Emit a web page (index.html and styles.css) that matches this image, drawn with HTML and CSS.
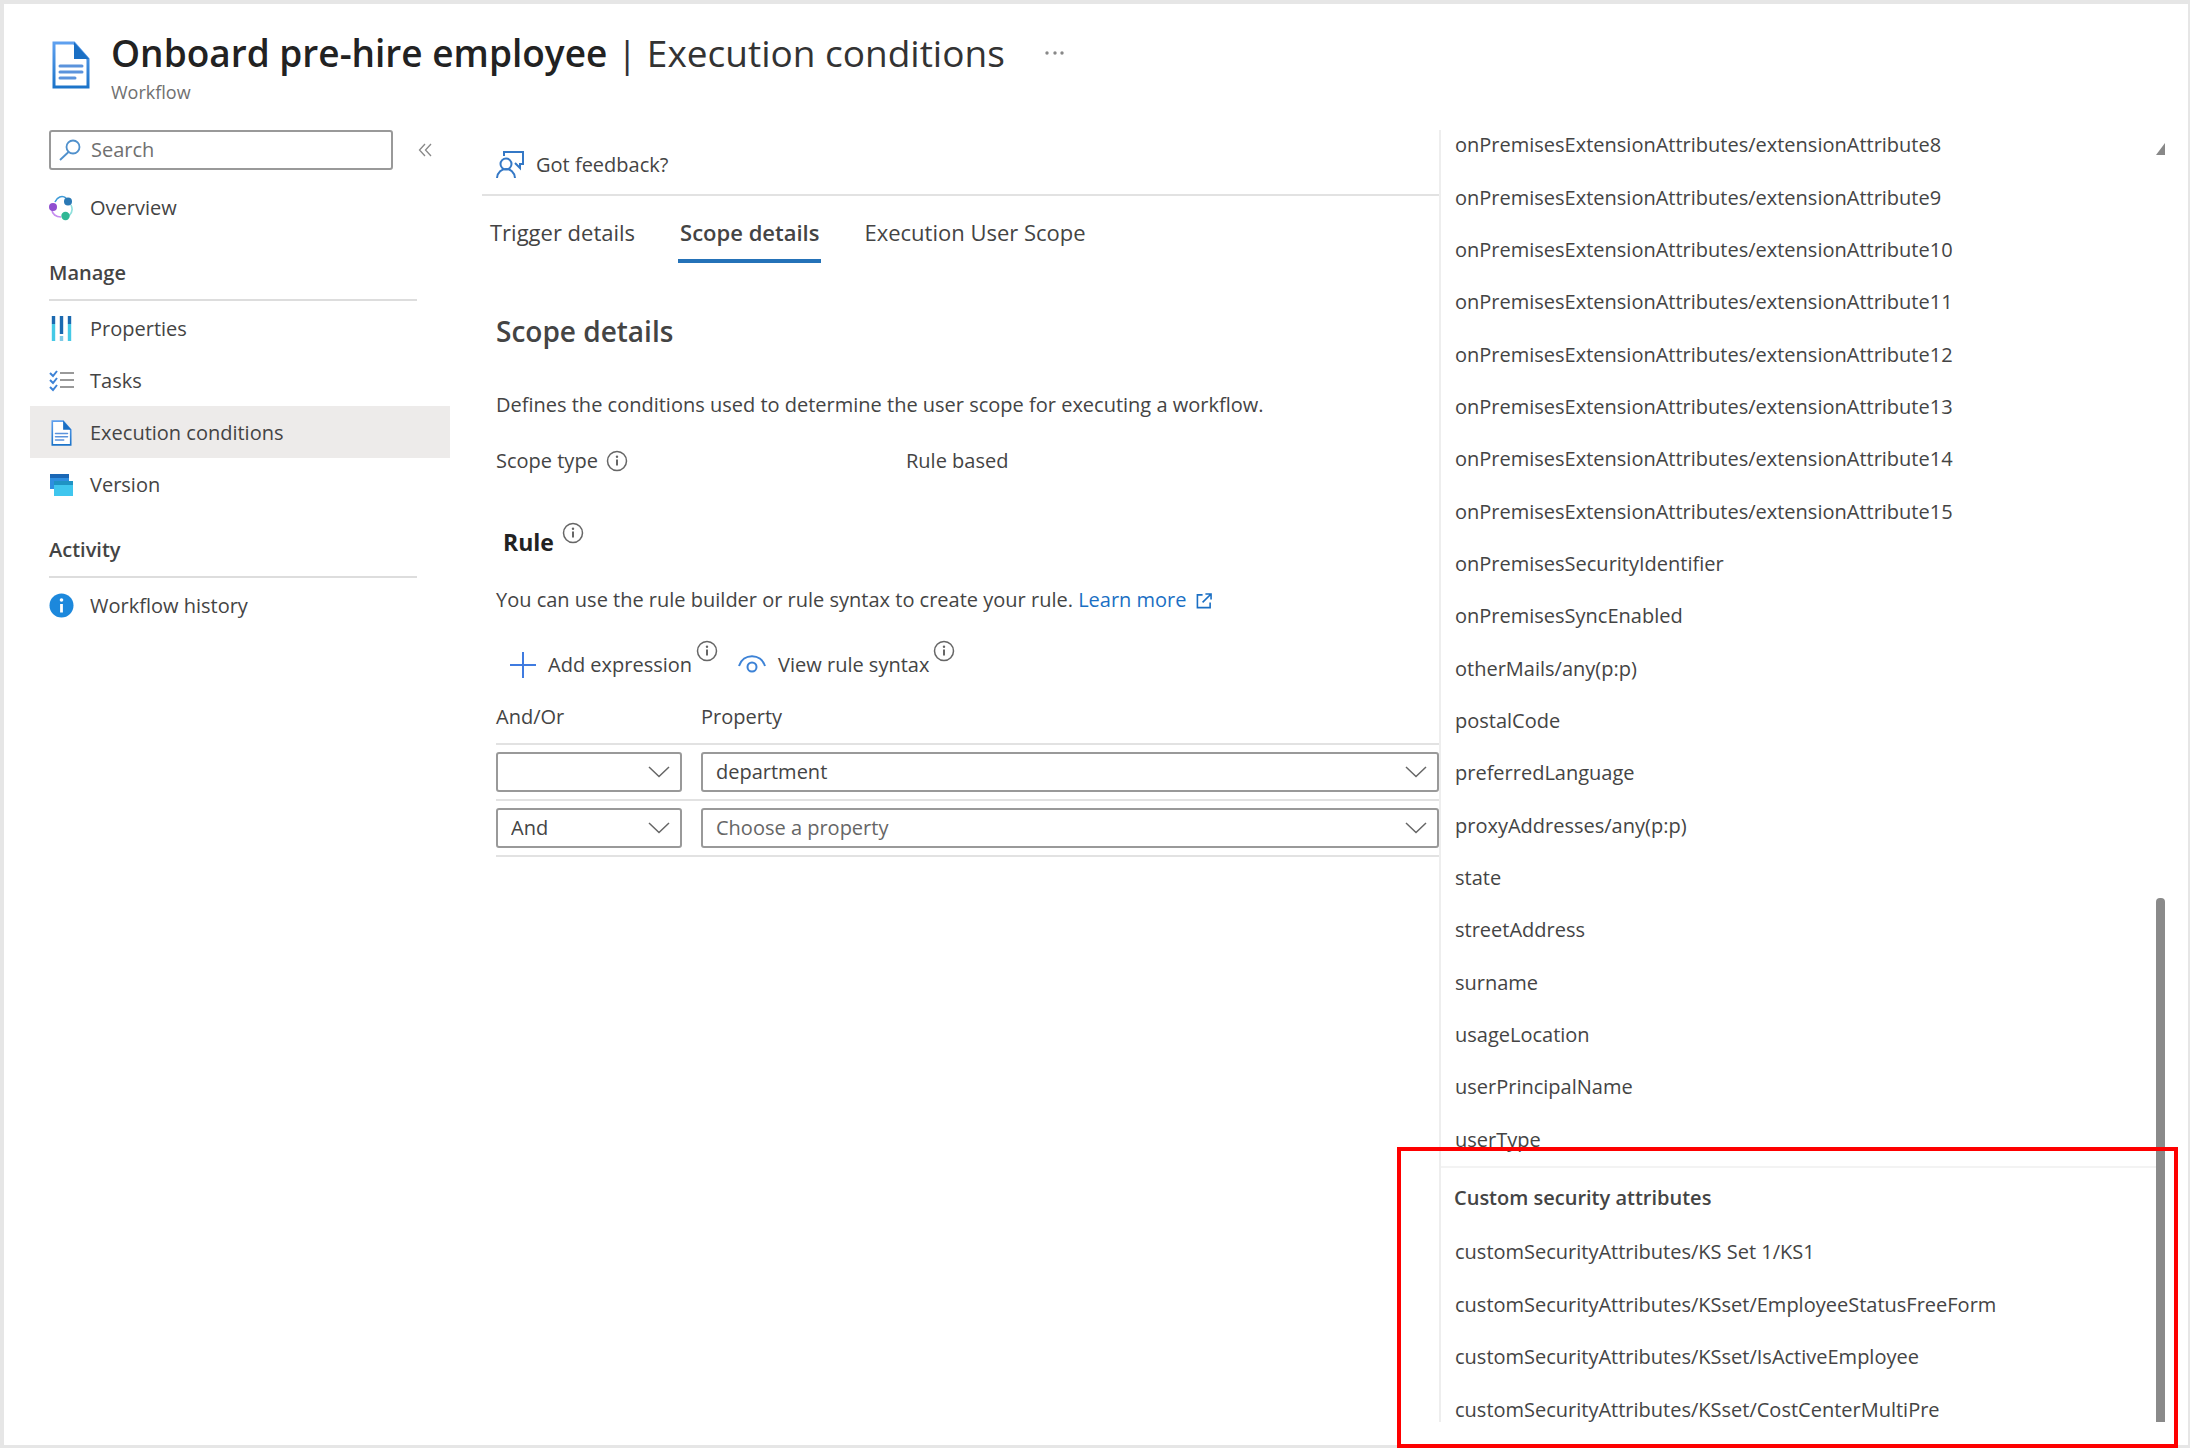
FILE: index.html
```html
<!DOCTYPE html>
<html lang="en">
<head>
<meta charset="utf-8">
<meta name="viewport" content="width=device-width, initial-scale=1">
<title>Onboard pre-hire employee | Execution conditions</title>
<link rel="stylesheet" href="styles.css">
</head>
<body>
<svg class="sprite" aria-hidden="true">
  <defs>
    <linearGradient id="blue" x1="0" y1="0" x2="0" y2="1"><stop offset="0" stop-color="#5ea0ef"/><stop offset="1" stop-color="#1c74c9"/></linearGradient>
    <symbol id="doc" viewBox="0 0 38 48">
      <path d="M2 2h20l14 16v28H2z" fill="#fff" stroke="url(#blue)" stroke-width="3"/>
      <path d="M22 1l15 17H22z" fill="#1a6fc4"/>
      <path d="M8 25h22M8 31h22M8 37h15" stroke="#5b93dc" stroke-width="3" stroke-linecap="round"/>
    </symbol>
    <symbol id="info" viewBox="0 0 22 22">
      <circle cx="11" cy="11" r="9.5" fill="none" stroke="#666" stroke-width="1.5"/>
      <path d="M11 9.500v6" stroke="#666" stroke-width="2"/><circle cx="11" cy="6.800" r="1.200" fill="#666"/>
    </symbol>
    <symbol id="chevron" viewBox="0 0 22 12"><path d="M1 1l10 9.500L21 1" fill="none" stroke="#666" stroke-width="1.500"/></symbol>
  </defs>
</svg>
<div class="page">
  <header class="page-header">
    <svg class="header-icon" aria-hidden="true"><use href="#doc"/></svg>
    <div>
      <div class="title-row">
        <h1><strong>Onboard pre-hire employee</strong> | Execution conditions</h1>
        <button class="more" type="button" aria-label="More">
          <svg width="20" height="4" viewBox="0 0 20 4" fill="#888"><circle cx="2" cy="2" r="1.700"/><circle cx="10" cy="2" r="1.700"/><circle cx="17" cy="2" r="1.700"/></svg>
        </button>
      </div>
      <p class="subtitle">Workflow</p>
    </div>
  </header>

  <div class="layout">
    <nav class="sidebar" aria-label="Workflow">
      <div class="search-row">
        <label class="search">
          <svg width="22" height="22" viewBox="0 0 22 22" fill="none" stroke="#4f90cc" stroke-width="1.800" aria-hidden="true"><circle cx="14" cy="8" r="6.500"/><path d="M9.500 13L1 21"/></svg>
          <input type="search" placeholder="Search" aria-label="Search">
        </label>
        <button class="collapse" type="button" aria-label="Collapse menu">
          <svg width="14" height="14" viewBox="0 0 14 14" fill="none" stroke="#888" stroke-width="1.300"><path d="M7 1L1.500 7 7 13M13 1L7.500 7 13 13"/></svg>
        </button>
      </div>
      <a class="nav-item" href="#overview">
        <svg width="25" height="26" viewBox="0 0 25 26" fill="none" aria-hidden="true"><path d="M6 7C8 2 13 0 17 3" stroke="#3f9bd8" stroke-width="1.600"/><path d="M22 10c2 4 1 8-2 11" stroke="#8fe0dc" stroke-width="1.600"/><path d="M3 15c0 4 4 7 9 7" stroke="#c58cf0" stroke-width="1.600"/><circle cx="4" cy="12" r="4" fill="#8f4fd0"/><circle cx="19" cy="6.500" r="4" fill="#2b79b5"/><circle cx="16.500" cy="21" r="4.200" fill="#30b795"/></svg>
        Overview</a>
      <h2 class="nav-heading">Manage</h2>
      <a class="nav-item" href="#properties">
        <svg width="25" height="26" viewBox="0 0 25 26" aria-hidden="true"><path d="M4.500 0v8M12.500 0v18M20.500 0v8" stroke="#1b69b0" stroke-width="3.400"/><path d="M4.500 8v17M20.500 8v17" stroke="#45c9e6" stroke-width="3.400"/><path d="M12.500 20v5" stroke="#7fc9e6" stroke-width="3.400"/></svg>
        Properties</a>
      <a class="nav-item" href="#tasks">
        <svg width="25" height="26" viewBox="0 0 25 26" fill="none" aria-hidden="true"><path d="M1 5l3 3 4-5M1 12l3 3 4-5M1 19l3 3 4-5" stroke="#3c82d6" stroke-width="2"/><path d="M11 5h14M11 12h14M11 19h14" stroke="#999" stroke-width="2.200"/></svg>
        Tasks</a>
      <a class="nav-item selected" href="#conditions" aria-current="page">
        <svg width="25" height="26" aria-hidden="true"><use href="#doc"/></svg>
        Execution conditions</a>
      <a class="nav-item" href="#version">
        <svg width="25" height="26" viewBox="0 0 25 26" aria-hidden="true"><path d="M1 2h19v15H1z" fill="#2f8fe0"/><path d="M1 2h19v4H1z" fill="#1a67b5"/><path d="M5 9h19v15H5z" fill="#3fc6ee"/><path d="M5 9h19v4H5z" fill="#1f93c4"/></svg>
        Version</a>
      <h2 class="nav-heading">Activity</h2>
      <a class="nav-item" href="#history">
        <svg width="25" height="26" viewBox="0 0 25 26" aria-hidden="true"><circle cx="12.500" cy="12.500" r="12" fill="#1c88dc"/><path d="M12.500 11v8.500" stroke="#fff" stroke-width="2.800"/><circle cx="12.500" cy="7" r="1.800" fill="#fff"/></svg>
        Workflow history</a>
    </nav>

    <main class="content">
      <div class="command-bar">
        <button class="command" type="button">
          <svg width="28" height="28" viewBox="0 0 28 28" fill="none" stroke="#3478c6" stroke-width="2" aria-hidden="true"><circle cx="10" cy="13" r="5.500"/><path d="M1 27c1-12 17-12 18 0M8 5V1h19v12h-3v4l-5-5"/></svg>
          Got feedback?</button>
      </div>
      <div class="tabs" role="tablist">
        <button class="tab" type="button" role="tab">Trigger details</button>
        <button class="tab active" type="button" role="tab" aria-selected="true">Scope details</button>
        <button class="tab" type="button" role="tab">Execution User Scope</button>
      </div>

      <section class="details">
        <h2>Scope details</h2>
        <p class="intro">Defines the conditions used to determine the user scope for executing a workflow.</p>
        <dl class="field">
          <dt>Scope type <svg class="info"><use href="#info"/></svg></dt>
          <dd>Rule based</dd>
        </dl>
        <h3>Rule <svg class="info"><use href="#info"/></svg></h3>
        <p class="hint">You can use the rule builder or rule syntax to create your rule. <a href="#learn">Learn more
          <svg width="16" height="16" viewBox="0 0 17 17" fill="none" stroke="#1a6fc4" stroke-width="1.700" aria-hidden="true"><path d="M7 2H1.500v13.500H15V10M10 1h6v6M16 1L7 10"/></svg></a></p>
        <div class="rule-tools">
          <button class="command" type="button">
            <svg width="26" height="26" viewBox="0 0 26 26" stroke="#3f7be0" stroke-width="2" aria-hidden="true"><path d="M13 0v26M0 13h26"/></svg>
            Add expression</button>
          <svg class="info"><use href="#info"/></svg>
          <button class="command" type="button">
            <svg width="28" height="26" viewBox="0 0 28 26" fill="none" stroke="#3c82d6" stroke-width="2" aria-hidden="true"><path d="M1 14C5 1 23 1 27 14"/><circle cx="14" cy="15" r="4.500"/></svg>
            View rule syntax</button>
          <svg class="info"><use href="#info"/></svg>
        </div>
        <table class="rules">
          <thead><tr><th scope="col">And/Or</th><th scope="col">Property</th></tr></thead>
          <tbody>
            <tr>
              <td><div class="select"><select aria-label="And/Or, row 1"><option></option><option>And</option><option>Or</option></select><svg><use href="#chevron"/></svg></div></td>
              <td><div class="select"><select aria-label="Property, row 1"><option>department</option></select><svg><use href="#chevron"/></svg></div></td>
            </tr>
            <tr>
              <td><div class="select"><select aria-label="And/Or, row 2"><option>And</option><option>Or</option></select><svg><use href="#chevron"/></svg></div></td>
              <td><div class="select"><select class="empty" aria-label="Property, row 2"><option>Choose a property</option></select><svg><use href="#chevron"/></svg></div></td>
            </tr>
          </tbody>
        </table>
      </section>
    </main>

    <aside class="flyout">
      <div class="options" role="listbox" aria-label="Property">
        <ul class="group attributes" role="group" aria-label="Attributes">
          <li role="option">onPremisesExtensionAttributes/extensionAttribute8</li>
          <li role="option">onPremisesExtensionAttributes/extensionAttribute9</li>
          <li role="option">onPremisesExtensionAttributes/extensionAttribute10</li>
          <li role="option">onPremisesExtensionAttributes/extensionAttribute11</li>
          <li role="option">onPremisesExtensionAttributes/extensionAttribute12</li>
          <li role="option">onPremisesExtensionAttributes/extensionAttribute13</li>
          <li role="option">onPremisesExtensionAttributes/extensionAttribute14</li>
          <li role="option">onPremisesExtensionAttributes/extensionAttribute15</li>
          <li role="option">onPremisesSecurityIdentifier</li>
          <li role="option">onPremisesSyncEnabled</li>
          <li role="option">otherMails/any(p:p)</li>
          <li role="option">postalCode</li>
          <li role="option">preferredLanguage</li>
          <li role="option">proxyAddresses/any(p:p)</li>
          <li role="option">state</li>
          <li role="option">streetAddress</li>
          <li role="option">surname</li>
          <li role="option">usageLocation</li>
          <li role="option">userPrincipalName</li>
          <li role="option">userType</li>
        </ul>
        <h2 class="group-heading">Custom security attributes</h2>
        <ul class="group security" role="group" aria-label="Custom security attributes">
          <li role="option">customSecurityAttributes/KS Set 1/KS1</li>
          <li role="option">customSecurityAttributes/KSset/EmployeeStatusFreeForm</li>
          <li role="option">customSecurityAttributes/KSset/IsActiveEmployee</li>
          <li role="option">customSecurityAttributes/KSset/CostCenterMultiPre</li>
        </ul>
      </div>
      <div class="scrollbar" aria-hidden="true">
        <svg width="9" height="12" viewBox="0 0 9 12"><path d="M9 0v12H0z" fill="#888"/></svg>
        <span class="thumb"></span>
      </div>
      <div class="highlight"></div>
    </aside>
  </div>
</div>
</body>
</html>
```
FILE: styles.css
```css
* { box-sizing: border-box; }

body {
  margin: 0;
  background: #fff;
  color: #444;
  font: 20px/28px "Open Sans", "Noto Sans", sans-serif;
}

h1, h2, h3, p, ul, dl, dd { margin: 0; padding: 0; font-size: inherit; }
button, input, select { font: inherit; color: inherit; }
button { padding: 0; border: 0; background: none; }
a { color: inherit; text-decoration: none; }
svg { flex: none; }

.sprite { position: absolute; width: 0; height: 0; }

.page {
  min-height: 100vh;
  border: 2px solid #e6e6e6;
  border-width: 4px 2px 3px 4px;
}

.page-header {
  display: flex;
  gap: 21px;
  height: 115px;
  padding: 24px 0 0 48px;
}
.header-icon { width: 38px; height: 48px; margin-top: 13px; }
.title-row { display: flex; align-items: center; gap: 40px; }
h1 { font-size: 37px; line-height: 50px; font-weight: 400; color: #333; }
h1 strong { font-weight: 600; color: #222; }
.more { display: flex; }
.subtitle { font-size: 18px; color: #707070; }

.layout {
  display: grid;
  grid-template-columns: 446px minmax(0, 1fr) 726px;
  padding-right: 23px;
}

.sidebar { padding: 11px 0 0 26px; }
.search-row { display: flex; align-items: center; gap: 25px; margin: 0 0 11px 19px; }
.search {
  display: flex;
  align-items: center;
  gap: 10px;
  width: 344px;
  height: 40px;
  padding: 0 8px;
  border: 2px solid #999;
  border-radius: 3px;
}
.search input { min-width: 0; width: 100%; padding: 0; border: 0; outline: 0; background: none; }
.search input::placeholder { color: #707070; opacity: 1; }
.collapse { display: flex; }

.nav-item { display: flex; align-items: center; gap: 16px; height: 52px; padding: 2px 0 0 19px; }
.nav-item.selected { background: #edebea; }
.nav-heading {
  margin: 26px 33px 1px 19px;
  padding-bottom: 12px;
  border-bottom: 2px solid #ddd;
  font-weight: 600;
}

.content { padding-left: 32px; }
.command-bar { height: 77px; padding: 32px 0 0 14px; border-bottom: 2px solid #e2e2e2; }
.command { display: flex; align-items: center; gap: 12px; white-space: nowrap; }

.tabs { display: flex; gap: 41px; padding-left: 6px; }
.tab { height: 67px; padding: 8px 2px 0; border-bottom: 4px solid transparent; font-size: 22px; white-space: nowrap; }
.tab.active { border-color: #2472b8; font-weight: 600; }

.details { padding: 48px 0 0 14px; }
.details h2 { font-size: 28px; line-height: 40px; font-weight: 600; }
.intro { margin-top: 40px; }
.field { display: flex; margin-top: 28px; }
.field dt { display: flex; align-items: center; gap: 8px; width: 410px; }
.info { width: 22px; height: 22px; }
.details h3 { display: flex; gap: 8px; margin: 47px 0 0 7px; font-size: 23px; line-height: 40px; font-weight: 700; color: #222; }
.hint { margin-top: 24px; white-space: nowrap; }
.hint a { color: #1a6fc4; }
.hint svg { margin-left: 4px; vertical-align: -2px; }
.rule-tools { display: flex; gap: 4px; margin: 26px 0 0 14px; }
.rule-tools .command { height: 50px; }
.rule-tools .command + .info + .command { margin-left: 16px; }

.rules { width: 100%; border-collapse: collapse; table-layout: fixed; }
.rules th { height: 54px; padding: 0; font-weight: 400; text-align: left; }
.rules th:first-child { width: 205px; }
.rules tr { border-bottom: 2px solid #e2e2e2; }
.rules td { height: 56px; padding: 0; }
.rules td:first-child { padding-right: 19px; }
.select { display: grid; align-items: center; }
.select > * { grid-area: 1 / 1; }
.select select {
  width: 100%;
  height: 40px;
  padding: 0 40px 0 13px;
  border: 2px solid #999;
  border-radius: 3px;
  background: #fff;
  appearance: none;
}
.select .empty { color: #666; }
.select svg { justify-self: end; width: 22px; height: 12px; margin-right: 12px; pointer-events: none; }

.flyout {
  position: relative;
  display: flex;
  height: calc(100vh - 145px);
}
.options {
  flex: 1;
  margin-top: 11px;
  overflow: hidden;
  border-left: 2px solid #eee;
}
.group { display: grid; grid-auto-rows: 1fr; align-items: center; list-style: none; padding-left: 14px; }
.attributes { height: 1049px; margin-top: -11px; border-bottom: 2px solid #f3f3f3; }
.security { height: 210px; }
.group-heading { padding: 16px 0 14px 13px; font-weight: 600; }
.scrollbar { display: flex; flex-direction: column; justify-content: space-between; width: 9px; padding-top: 24px; }
.thumb { height: 41%; border-radius: 4px 4px 0 0; background: #8a8a8a; }

.highlight {
  position: absolute;
  right: -13px;
  bottom: -26px;
  left: -42px;
  height: 301px;
  border: 4px solid #fe0000;
}
```
